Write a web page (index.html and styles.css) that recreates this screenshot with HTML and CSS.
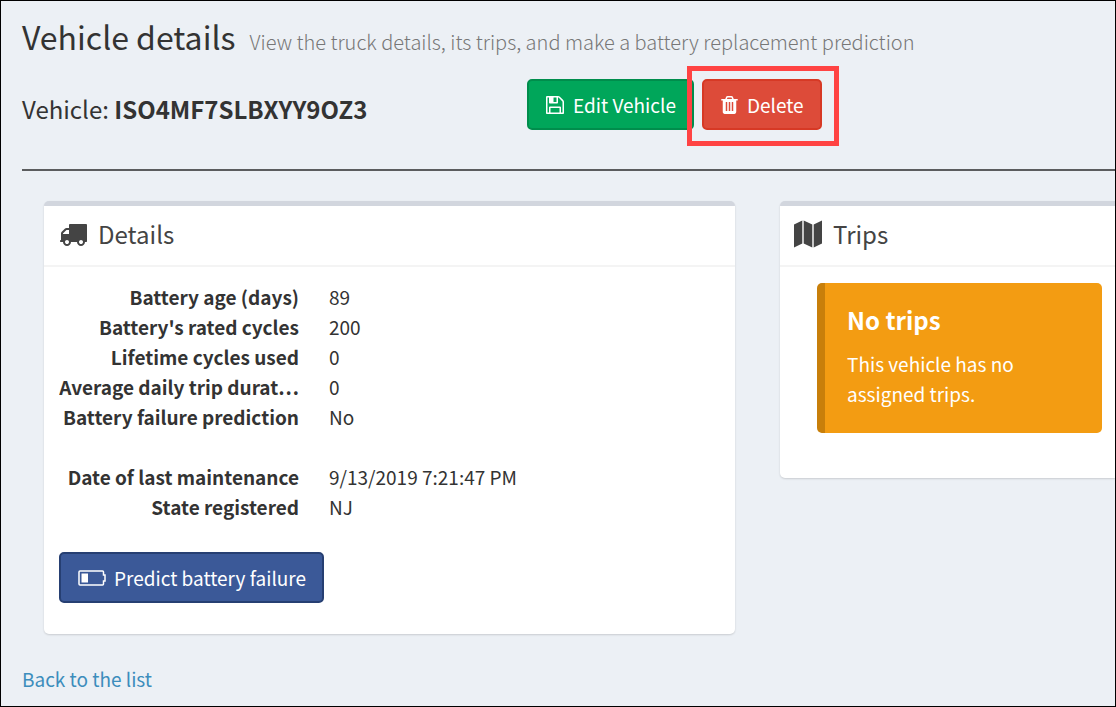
FILE: index.html
```html
<!DOCTYPE html>
<html lang="en">
<head>
<meta charset="utf-8">
<title>Vehicle details</title>
<link rel="stylesheet" href="styles.css">
</head>
<body>
<main class="page">
  <header class="page-header">
    <h1>Vehicle details</h1>
    <p class="subtitle">View the truck details, its trips, and make a battery replacement prediction</p>
  </header>

  <section class="toolbar">
    <h2 class="vehicle">Vehicle: <strong>ISO4MF7SLBXYY9OZ3</strong></h2>
    <div class="actions">
      <button type="button" class="btn btn-success">
        <svg class="icon" viewBox="128 128 1536 1536" aria-hidden="true"><path d="M512 1536h768v-384h-768v384zm896 0h128v-896q0-14-10-38.500t-20-34.500l-281-281q-10-10-34-20t-39-10v416q0 40-28 68t-68 28h-576q-40 0-68-28t-28-68v-416h-128v1280h128v-416q0-40 28-68t68-28h832q40 0 68 28t28 68v416zm-384-928v-320q0-13-9.500-22.500t-22.500-9.500h-192q-13 0-22.500 9.500t-9.500 22.500v320q0 13 9.500 22.500t22.500 9.500h192q13 0 22.500-9.500t9.500-22.500zm640 32v928q0 40-28 68t-68 28h-1344q-40 0-68-28t-28-68v-1344q0-40 28-68t68-28h928q40 0 88 20t76 48l280 280q28 28 48 76t20 88z"/></svg>
        Edit Vehicle
      </button>
      <div class="highlight">
        <button type="button" class="btn btn-danger">
          <svg class="icon icon-trash" viewBox="192 128 1408 1536" aria-hidden="true"><path d="M704 1376v-704q0-14-9-23t-23-9h-64q-14 0-23 9t-9 23v704q0 14 9 23t23 9h64q14 0 23-9t9-23zm256 0v-704q0-14-9-23t-23-9h-64q-14 0-23 9t-9 23v704q0 14 9 23t23 9h64q14 0 23-9t9-23zm256 0v-704q0-14-9-23t-23-9h-64q-14 0-23 9t-9 23v704q0 14 9 23t23 9h64q14 0 23-9t9-23zm-544-992h448l-48-117q-7-9-17-11h-317q-10 2-17 11zm928 32v64q0 14-9 23t-23 9h-96v948q0 83-47 143.500t-113 60.500h-832q-66 0-113-58.500t-47-141.500v-952h-96q-14 0-23-9t-9-23v-64q0-14 9-23t23-9h309l70-167q15-37 54-63t79-26h320q40 0 79 26t54 63l70 167h309q14 0 23 9t9 23z"/></svg>
          Delete
        </button>
      </div>
    </div>
  </section>

  <hr class="divider">

  <div class="cards">
    <section class="card">
      <div class="card-header">
        <svg class="icon icon-title" viewBox="0 0 1792 1792" aria-hidden="true"><path d="M640 1408q0-52-38-90t-90-38-90 38-38 90 38 90 90 38 90-38 38-90zm-384-512h384v-256h-158q-13 0-22 9l-195 195q-9 9-9 22v30zm1280 512q0-52-38-90t-90-38-90 38-38 90 38 90 90 38 90-38 38-90zm256-1088v1024q0 15-4 26.500t-13.500 18.500-16.500 11.500-23.500 6-22.500 2-25.500 0-22.500-.5q0 106-75 181t-181 75-181-75-75-181h-384q0 106-75 181t-181 75-181-75-75-181h-64q-3 0-22.500.5t-25.500 0-22.500-2-23.500-6-16.500-11.500-13.500-18.500-4-26.500q0-26 19-45t45-19v-320q0-8-.5-35t0-38 2.500-34.500 6.500-37 14-30.500 22.500-30l198-198q19-19 50.500-32t58.500-13h160v-192q0-26 19-45t45-19h1024q26 0 45 19t19 45z"/></svg>
        <h3>Details</h3>
      </div>
      <div class="card-body">
        <dl class="facts">
          <dt>Battery age (days)</dt><dd>89</dd>
          <dt>Battery's rated cycles</dt><dd>200</dd>
          <dt>Lifetime cycles used</dt><dd>0</dd>
          <dt>Average daily trip durat…</dt><dd>0</dd>
          <dt>Battery failure prediction</dt><dd>No</dd>
        </dl>
        <dl class="facts">
          <dt>Date of last maintenance</dt><dd>9/13/2019 7:21:47 PM</dd>
          <dt>State registered</dt><dd>NJ</dd>
        </dl>
        <button type="button" class="btn btn-primary">
          <svg class="icon icon-battery" viewBox="0 0 28 16" aria-hidden="true"><path d="M2 1h22.500q1 0 1 1v3h1.500v6h-1.500v3q0 1-1 1h-22.500q-1 0-1-1v-12q0-1 1-1z" fill="none" stroke="currentColor" stroke-width="1.500"/><path d="M3.500 3.500h6.500v9h-6.500z"/></svg>
          Predict battery failure
        </button>
      </div>
    </section>

    <section class="card card-trips">
      <div class="card-header">
        <svg class="icon icon-title" viewBox="0 0 28 28" aria-hidden="true"><path d="M0 4.500 8.300.5v23L0 27.500zM9.700.5l8.600 4v23l-8.600-4zM19.700 4.500l8.300-4v23l-8.300 4z"/></svg>
        <h3>Trips</h3>
      </div>
      <div class="trips-body">
        <div class="callout">
          <h4>No trips</h4>
          <p>This vehicle has no assigned trips.</p>
        </div>
      </div>
    </section>
  </div>

  <a class="back" href="#">Back to the list</a>
</main>
</body>
</html>
```
FILE: styles.css
```css
* {
  box-sizing: border-box;
}

body {
  margin: 0;
  background: #ecf0f5;
  color: #333;
  font-family: "Noto Sans CJK KR", "Noto Sans", sans-serif;
  font-size: 19px;
  line-height: 30px;
}

h1, h2, h3, h4, p, dl, dd {
  margin: 0;
}

h1, h2, h3 {
  font-weight: 400;
}

.page {
  min-height: 100vh;
  border: 1px solid #000;
  padding: 14px 0 10px 21px;
  overflow: hidden;
}

.page-header {
  display: flex;
  align-items: baseline;
  gap: 14px;
}

h1 {
  font-size: 32px;
  line-height: 42px;
}

.subtitle {
  color: #777;
  font-size: 20px;
  font-weight: 300;
}

.toolbar {
  display: grid;
  grid-template-columns: 505fr 588fr;
  align-items: center;
  margin-top: 22px;
}

.vehicle {
  font-size: 24px;
  line-height: 36px;
  padding-top: 8px;
}

.actions {
  display: flex;
  gap: 8px;
}

.btn {
  display: inline-flex;
  align-items: center;
  gap: 9px;
  height: 51px;
  padding: 0 16px 0 17px;
  border: 2px solid;
  border-radius: 5px;
  color: #fff;
  font: inherit;
  white-space: nowrap;
}

.btn-success {
  background: #00a65a;
  border-color: #008d4c;
}

.btn-danger {
  background: #dd4b39;
  border-color: #d73925;
}

.btn-primary {
  gap: 8px;
  background: #3b5998;
  border-color: #263f72;
}

.highlight {
  position: relative;
}

.highlight::after {
  content: "";
  position: absolute;
  inset: -13px -17px -16px -15px;
  border: 5px solid #ff4343;
  pointer-events: none;
}

.icon {
  flex: none;
  width: 18px;
  height: 18px;
  fill: currentColor;
}

.icon-trash {
  width: 17px;
}

.icon-title {
  width: 28px;
  height: 28px;
}

.icon-battery {
  width: 28px;
  height: 16px;
}

.divider {
  height: 2px;
  margin: 39px 0 30px;
  border: 0;
  background: #5b5c5e;
}

.cards {
  display: grid;
  grid-template-columns: 691fr 335fr;
  gap: 45px;
  align-items: start;
  padding-left: 22px;
}

.card {
  min-width: 0;
  border-top: 5px solid #d2d6de;
  border-radius: 5px;
  background: #fff;
  box-shadow: 0 1px 2px rgba(0, 0, 0, 0.15);
}

.card-trips {
  border-radius: 5px 0 0 5px;
}

.card-header {
  display: flex;
  align-items: center;
  gap: 11px;
  height: 61px;
  padding: 0 14px 4px 15px;
  border-bottom: 2px solid #f4f4f4;
  color: #444;
}

.card-trips .card-header {
  padding-left: 14px;
}

h3 {
  font-size: 24px;
  line-height: 30px;
}

.card-body {
  padding: 15px 15px 31px;
}

.facts {
  display: grid;
  grid-template-columns: 240px 1fr;
  column-gap: 30px;
  margin-bottom: 30px;
}

dt {
  overflow: hidden;
  font-weight: 700;
  text-align: right;
  text-overflow: ellipsis;
  white-space: nowrap;
}

.trips-body {
  padding: 16px 13px 45px 37px;
}

.callout {
  padding: 22px 30px 24px 22px;
  border-left: 8px solid #c87f0a;
  border-radius: 5px;
  background: #f39c12;
  color: #fff;
}

h4 {
  margin-bottom: 14px;
  font-size: 24px;
  font-weight: 700;
  line-height: 30px;
}

.back {
  display: inline-block;
  margin-top: 30px;
  color: #3c8dbc;
  text-decoration: none;
}
```
